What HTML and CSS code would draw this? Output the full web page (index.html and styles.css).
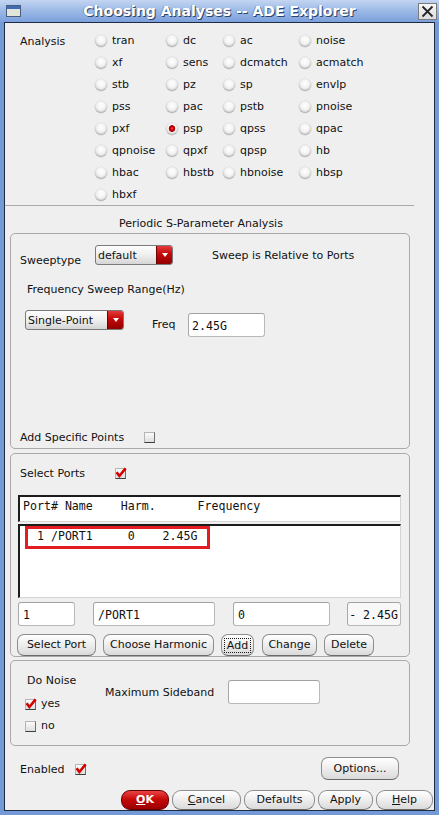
FILE: index.html
```html
<!DOCTYPE html>
<html lang="en">
<head>
<meta charset="utf-8">
<title>Choosing Analyses -- ADE Explorer</title>
<link rel="stylesheet" href="styles.css">
</head>
<body>
<div class="window">
  <div class="titlebar">
    <div class="tb-left"><span class="win-icon"><span class="win-icon-bar"></span></span></div>
    <div class="title">Choosing Analyses -- ADE Explorer</div>
    <div class="tb-right"><span class="close-btn"><svg width="13" height="13" viewBox="0 0 13 13"><path d="M1.5 1.5 L11.5 11.5 M11.5 1.5 L1.5 11.5" stroke="#262626" stroke-width="1.8" fill="none"/></svg></span></div>
  </div>
  <div class="client">
    <div class="analysis">
      <div class="an-label">Analysis</div>
      <div class="opt"><span class="rb"></span>tran</div>
      <div class="opt"><span class="rb"></span>dc</div>
      <div class="opt"><span class="rb"></span>ac</div>
      <div class="opt"><span class="rb"></span>noise</div>
      <div class="opt"><span class="rb"></span>xf</div>
      <div class="opt"><span class="rb"></span>sens</div>
      <div class="opt"><span class="rb"></span>dcmatch</div>
      <div class="opt"><span class="rb"></span>acmatch</div>
      <div class="opt"><span class="rb"></span>stb</div>
      <div class="opt"><span class="rb"></span>pz</div>
      <div class="opt"><span class="rb"></span>sp</div>
      <div class="opt"><span class="rb"></span>envlp</div>
      <div class="opt"><span class="rb"></span>pss</div>
      <div class="opt"><span class="rb"></span>pac</div>
      <div class="opt"><span class="rb"></span>pstb</div>
      <div class="opt"><span class="rb"></span>pnoise</div>
      <div class="opt"><span class="rb"></span>pxf</div>
      <div class="opt"><span class="rb on"></span>psp</div>
      <div class="opt"><span class="rb"></span>qpss</div>
      <div class="opt"><span class="rb"></span>qpac</div>
      <div class="opt"><span class="rb"></span>qpnoise</div>
      <div class="opt"><span class="rb"></span>qpxf</div>
      <div class="opt"><span class="rb"></span>qpsp</div>
      <div class="opt"><span class="rb"></span>hb</div>
      <div class="opt"><span class="rb"></span>hbac</div>
      <div class="opt"><span class="rb"></span>hbstb</div>
      <div class="opt"><span class="rb"></span>hbnoise</div>
      <div class="opt"><span class="rb"></span>hbsp</div>
      <div class="opt"><span class="rb"></span>hbxf</div>
    </div>
    <div class="sep"></div>
    <div class="sec-title">Periodic S-Parameter Analysis</div>

    <div class="box box1">
      <div class="sweep-row">
        <span class="sweeptype-lbl">Sweeptype</span>
        <span class="combo combo-default"><span class="combo-text">default</span><span class="combo-arrow"></span></span>
        <span class="sweep-note">Sweep is Relative to Ports</span>
      </div>
      <div class="range-lbl">Frequency Sweep Range(Hz)</div>
      <div class="freq-row">
        <span class="combo combo-single"><span class="combo-text">Single-Point</span><span class="combo-arrow"></span></span>
        <span class="freq-lbl">Freq</span>
        <span class="field freq-field mono">2.45G</span>
      </div>
      <div class="add-row">
        <span class="add-lbl">Add Specific Points</span>
        <span class="cb"></span>
      </div>
    </div>

    <div class="box box2">
      <div class="sel-row">
        <span class="sel-lbl">Select Ports</span>
        <span class="cb"><svg class="chk" width="12" height="12" viewBox="0 0 12 12"><path d="M1.6 5.2 L4.4 9 L10.6 1.4" fill="none" stroke="#d40000" stroke-width="2.6"/></svg></span>
      </div>
      <div class="list list-head mono">Port# Name    Harm.      Frequency</div>
      <div class="list list-body">
        <div class="mono">  1 /PORT1     0    2.45G</div>
        <span class="hl"></span>
      </div>
      <div class="inputs">
        <span class="field mono in1">1</span>
        <span class="field mono in2">/PORT1</span>
        <span class="field mono in3">0</span>
        <span class="field mono in4">- 2.45G</span>
      </div>
      <div class="btns">
        <button class="btn b-select">Select Port</button>
        <button class="btn b-harm">Choose Harmonic</button>
        <button class="btn b-add"><span class="focus">Add</span></button>
        <button class="btn b-change">Change</button>
        <button class="btn b-delete">Delete</button>
      </div>
    </div>

    <div class="box box3">
      <div class="noise-left">
        <div class="noise-title">Do Noise</div>
        <div class="cbrow first"><span class="cb"><svg class="chk" width="12" height="12" viewBox="0 0 12 12"><path d="M1.6 5.2 L4.4 9 L10.6 1.4" fill="none" stroke="#d40000" stroke-width="2.6"/></svg></span><span>yes</span></div>
        <div class="cbrow second"><span class="cb"></span><span>no</span></div>
      </div>
      <div class="noise-right">
        <span class="maxsb-lbl">Maximum Sideband</span>
        <span class="field maxsb-field"></span>
      </div>
    </div>

    <div class="enabled-row">
      <span class="enabled-lbl">Enabled</span>
      <span class="cb"><svg class="chk" width="12" height="12" viewBox="0 0 12 12"><path d="M1.6 5.2 L4.4 9 L10.6 1.4" fill="none" stroke="#d40000" stroke-width="2.6"/></svg></span>
      <button class="btn options-btn">Options...</button>
    </div>

    <div class="bottom-row">
      <button class="btn bbtn ok"><span><u>O</u>K</span></button>
      <button class="btn bbtn b-cancel"><span><u>C</u>ancel</span></button>
      <button class="btn bbtn b-defaults">Defaults</button>
      <button class="btn bbtn b-apply">Apply</button>
      <button class="btn bbtn b-help"><span><u>H</u>elp</span></button>
    </div>
  </div>
</div>
</body>
</html>
```

FILE: styles.css
```css
* { box-sizing: border-box; }
html, body { margin: 0; padding: 0; }
body {
  width: 439px;
  height: 815px;
  overflow: hidden;
  background: #7399d6;
  font-family: "DejaVu Sans", "Liberation Sans", sans-serif;
  font-size: 11px;
  color: #111;
}
.window {
  width: 439px;
  height: 815px;
  display: flex;
  flex-direction: column;
  padding: 0 4px 4px;
  background: #7399d6;
}

/* title bar */
.titlebar {
  flex: none;
  height: 22px;
  margin: 0 -4px;
  display: grid;
  grid-template-columns: 1fr auto 1fr;
  align-items: center;
  background: linear-gradient(#c3d5f1 0%, #9fbbe7 45%, #7ba0dc 100%);
}
.tb-left { padding-left: 6px; display: flex; align-items: center; }
.win-icon {
  width: 15px;
  height: 12px;
  border: 1px solid #4b5d7e;
  background: #e2e5da;
  display: flex;
  flex-direction: column;
}
.win-icon-bar { height: 3px; background: #3f6db5; }
.title {
  color: #fff;
  font-weight: bold;
  font-size: 14px;
  line-height: 18px;
  text-shadow: 1px 1px 0 #2f4468, -1px 0 0 rgba(40,60,100,.35);
  white-space: nowrap;
}
.tb-right { display: flex; justify-content: flex-end; padding-right: 2px; }
.close-btn {
  width: 19px;
  height: 17px;
  border: 1px solid #7b7b7b;
  background: linear-gradient(#f7f7f7, #dcdcdc);
  display: flex;
  align-items: center;
  justify-content: center;
}

/* client */
.client {
  flex: 1;
  background: #efefef;
  border: 1px solid #1e2b45;
  display: flex;
  flex-direction: column;
  overflow: hidden;
}

/* analysis grid */
.analysis {
  flex: none;
  display: grid;
  grid-template-columns: 75px 71px 57px 76px 1fr;
  grid-auto-rows: 22px;
  padding: 6px 0 0 15px;
}
.an-label { grid-row: 1 / span 8; padding-top: 6px; line-height: 14px; }
.opt { display: flex; align-items: center; gap: 5px; line-height: 14px; white-space: nowrap; padding-top: 1px; }
.rb {
  flex: none;
  width: 12px;
  height: 12px;
  border-radius: 50%;
  background: radial-gradient(circle at 50% 38%, #ffffff 0, #f4f4f4 40%, #d6d6d6 75%, #b4b4b4 100%);
  box-shadow: inset 0 -1px 1px rgba(0,0,0,.18), 0 0 0 0.5px rgba(0,0,0,.12);
}
.rb.on {
  background:
    radial-gradient(circle at 50% 46%, #ff5050 0, #d80000 1.6px, #a00000 3px, rgba(160,0,0,0) 3.6px),
    radial-gradient(circle at 50% 38%, #ffffff 0, #f4f4f4 40%, #d6d6d6 75%, #b4b4b4 100%);
}

.sep { flex: none; width: 409px; height: 1px; background: #a9a9a9; }
.sec-title { flex: none; margin-top: 11px; line-height: 14px; padding-left: 114px; }

/* boxes */
.box {
  flex: none;
  margin-left: 5px;
  width: 400px;
  border: 1px solid #a9a9a9;
  border-radius: 5px;
}
.box1 { margin-top: 2px; height: 216px; display: flex; flex-direction: column; padding: 11px 0 3px; }
.sweep-row { display: flex; align-items: flex-start; padding-left: 9px; height: 23px; }
.sweeptype-lbl { width: 75px; margin-top: 9px; line-height: 14px; }
.sweep-note { margin-left: 39px; margin-top: 4px; line-height: 14px; }
.range-lbl { margin-top: 15px; padding-left: 16px; line-height: 14px; }
.freq-row { margin-top: 13px; display: flex; align-items: flex-start; padding-left: 14px; height: 27px; }
.freq-lbl { margin-left: 28px; width: 36px; margin-top: 8px; line-height: 14px; }
.freq-field { width: 77px; margin-top: 3px; line-height: 24px; }
.add-row { margin-top: auto; display: flex; align-items: flex-start; padding-left: 9px; height: 14px; }
.add-lbl { width: 124px; line-height: 14px; }
.add-row .cb { margin-top: 1px; }

/* combos */
.combo {
  display: flex;
  height: 20px;
  border: 1px solid #7a7a7a;
  border-radius: 3px;
  overflow: hidden;
  background: linear-gradient(#fdfdfd 0%, #ededed 55%, #d5d5d5 100%);
}
.combo-default { width: 78px; }
.combo-single { width: 99px; }
.combo-text { flex: 1; padding-left: 2px; line-height: 20px; white-space: nowrap; }
.combo-arrow {
  width: 16px;
  flex: none;
  border-left: 1px solid #6d0000;
  background: linear-gradient(#e53a3a 0%, #c40808 45%, #900000 100%);
  display: flex;
  align-items: center;
  justify-content: center;
}
.combo-arrow::after {
  content: "";
  width: 0;
  height: 0;
  border-left: 3.5px solid transparent;
  border-right: 3.5px solid transparent;
  border-top: 4px solid #fff;
  margin-top: -1px;
}

/* fields */
.mono {
  font-family: "DejaVu Sans Mono", "Liberation Mono", monospace;
  font-size: 11.6px;
  white-space: pre;
  line-height: 14px;
}
.field {
  display: block;
  flex: none;
  height: 24px;
  background: #fff;
  border: 1px solid #b9b9b9;
  border-top-color: #a2a2a2;
  border-left-color: #a8a8a8;
  border-radius: 3px;
  padding-left: 3px;
  line-height: 24px;
}

/* checkbox */
.cb {
  position: relative;
  flex: none;
  display: block;
  width: 11px;
  height: 11px;
  background: linear-gradient(#fbfbfb, #dedede);
  border: 1px solid #b5b5b5;
  border-right-color: #6e6e6e;
  border-bottom-color: #3e3e3e;
}
.chk { position: absolute; left: -1px; top: -2px; }

/* box2 */
.box2 { margin-top: 4px; height: 204px; padding-top: 13px; }
.sel-row { display: flex; padding-left: 9px; height: 14px; line-height: 14px; }
.sel-lbl { width: 95px; }
.sel-row .cb { margin-top: 1px; }
.list {
  margin-left: 7px;
  width: 383px;
  background: #fff;
  border-top: 2px solid #1c1c1c;
  border-left: 2px solid #1c1c1c;
  border-right: 1px solid #d4d4d4;
  border-bottom: 1px solid #d4d4d4;
}
.list-head { margin-top: 14px; height: 27px; padding: 2px 0 0 3px; }
.list-body { margin-top: 2px; height: 74px; padding: 3px 0 0 3px; position: relative; }
.hl {
  position: absolute;
  left: 5px;
  top: 0;
  width: 185px;
  height: 23px;
  border: 3px solid #e31b23;
}
.inputs { margin: 4px 0 0 7px; display: flex; height: 24px; }
.in1 { width: 57px; padding-left: 4px; }
.in2 { width: 122px; margin-left: 18px; padding-left: 4px; }
.in3 { width: 97px; margin-left: 18px; padding-left: 4px; }
.in4 { width: 54px; margin-left: 17px; text-align: right; padding: 0 2px 0 0; background: #f8f8f8; }

/* buttons */
.btn {
  font: inherit;
  color: #111;
  margin: 0;
  padding: 0;
  flex: none;
  border: 1px solid #8e8e8e;
  border-bottom-color: #6a6a6a;
  border-radius: 7px;
  background: linear-gradient(#ffffff 0%, #f1f1f1 40%, #dadada 100%);
  display: flex;
  align-items: center;
  justify-content: center;
  line-height: 14px;
  white-space: nowrap;
}
.btns { margin: 8px 0 0 6px; display: flex; gap: 7px; height: 22px; }
.btns .btn { height: 22px; }
.b-select { width: 79px; }
.b-harm { width: 111px; }
.b-add { width: 33px; }
.b-change { width: 55px; margin-left: 1px; }
.b-delete { width: 50px; }
.focus {
  width: 27px;
  height: 15px;
  border: 1px dotted #1a1a1a;
  display: flex;
  align-items: center;
  justify-content: center;
  line-height: 13px;
}

/* box3 */
.box3 { margin-top: 3px; height: 86px; display: flex; }
.noise-left { padding: 13px 0 0 14px; width: 94px; }
.noise-title { margin-left: 2px; line-height: 14px; }
.cbrow { display: flex; align-items: center; gap: 5px; line-height: 14px; height: 14px; }
.cbrow.first { margin-top: 9px; }
.cbrow.second { margin-top: 8px; }
.noise-right { display: flex; align-items: center; margin-top: 19px; height: 24px; }
.maxsb-lbl { width: 123px; }
.maxsb-field { width: 92px; }

/* enabled */
.enabled-row { flex: none; margin-top: 11px; display: flex; align-items: flex-start; padding: 0 35px 0 15px; height: 23px; }
.enabled-lbl { width: 55px; margin-top: 6px; line-height: 14px; }
.enabled-row .cb { margin-top: 7px; }
.options-btn { margin-left: auto; width: 78px; height: 23px; }

/* bottom */
.bottom-row { flex: none; margin-top: 10px; display: flex; justify-content: flex-end; gap: 3px; padding-right: 1px; height: 20px; }
.bbtn { height: 20px; border-radius: 9px; }
.ok {
  width: 48px;
  color: #fff;
  font-weight: bold;
  border-color: #650000;
  background: linear-gradient(#ea4444 0%, #c80a0a 45%, #9c0000 100%);
}
.b-cancel { width: 69px; }
.b-defaults { width: 71px; }
.b-apply { width: 55px; }
.b-help { width: 57px; }
```
